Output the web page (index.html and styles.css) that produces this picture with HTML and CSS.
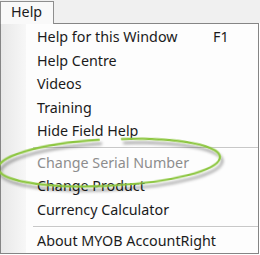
FILE: index.html
```html
<!DOCTYPE html>
<html>
<head>
    <meta charset="utf-8" />

    <title>Help menu</title>

    <link rel="stylesheet" href="styles.css">
</head>
<body>
    <div class="menubar">
        <div class="tab">Help</div>
    </div>

    <div class="menu">
        <div class="item"><span>Help for this Window</span><span class="key">F1</span></div>
        <div class="item">Help Centre</div>
        <div class="item">Videos</div>
        <div class="item">Training</div>
        <div class="item">Hide Field Help</div>
        <div class="separator"></div>
        <div class="item disabled">Change Serial Number</div>
        <div class="item">Change Product</div>
        <div class="item">Currency Calculator</div>
        <div class="separator"></div>
        <div class="item">About MYOB AccountRight</div>
    </div>

    <svg class="callout" width="260" height="255" viewBox="0 0 260 255">
        <defs>
            <filter id="shadow" x="-10%" y="-50%" width="120%" height="200%">
                <feDropShadow dx="2" dy="4" stdDeviation="1.6" flood-color="#000" flood-opacity="0.4" />
            </filter>
        </defs>
        <path d="M 123 139.6 A 107 23 0 0 1 112 185.5 A 107 23 0 0 1 100 139.2"
              transform="rotate(-3 112 162.5)"
              fill="none" stroke="#8cc63f" stroke-width="2.2" stroke-linecap="round" filter="url(#shadow)" />
    </svg>
</body>
</html>
```

FILE: styles.css
```css
* {
    box-sizing: border-box;
}

html, body {
    margin: 0;
    padding: 0;
}

body {
    width: 260px;
    height: 255px;
    background: #ffffff;
    font-family: "Noto Sans", "Open Sans", sans-serif;
    font-size: 14.3px;
    color: #1b1b1b;
    overflow: hidden;
}

.menubar {
    display: flex;
    height: 23px;
    padding-top: 1px;
    background: #f0f0f0;
}

.tab {
    position: relative;
    z-index: 1;
    width: 54px;
    height: 23px;
    padding-left: 10px;
    line-height: 19px;
    background: #f9f9f9;
    border: 1px solid #8e8e8e;
    border-bottom: none;
}

.menu {
    width: 259px;
    height: 231px;
    padding-top: 1px;
    border: 1px solid #858585;
    background: linear-gradient(to right, #e8e8e8 0, #f7f7f7 25px, #fdfdfd 25px);
}

.item {
    display: flex;
    height: 23.5px;
    line-height: 23.5px;
    padding-left: 36px;
    white-space: nowrap;
}

.item .key {
    margin-left: auto;
    width: 45px;
}

.disabled {
    color: #8d8d8d;
}

.separator {
    height: 2px;
    margin: 4.5px 0 1.5px 32px;
    border-top: 1px solid #c8c8c8;
    border-bottom: 1px solid #ffffff;
}

.callout {
    position: absolute;
    left: 0;
    top: 0;
    pointer-events: none;
}
```
